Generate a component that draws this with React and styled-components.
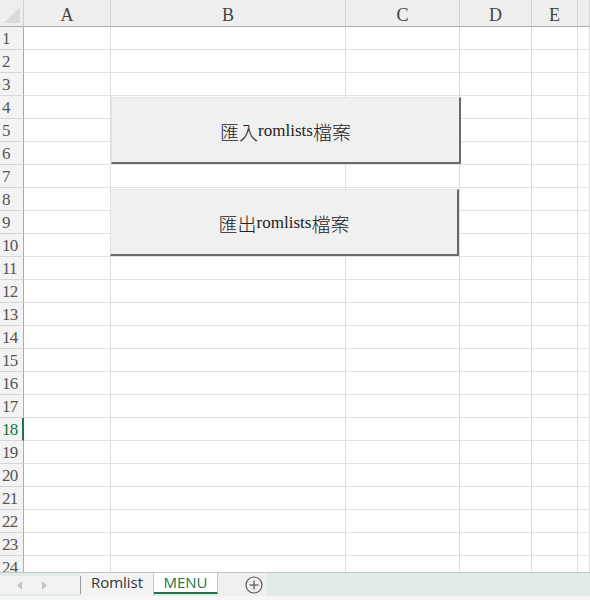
import React from 'react';
import styled, { createGlobalStyle } from 'styled-components';

const GlobalStyle = createGlobalStyle`
  html, body {
    margin: 0;
    padding: 0;
    background: #ffffff;
  }
  * {
    box-sizing: border-box;
  }
`;

const columns = ['A', 'B', 'C', 'D', 'E', ''];
const rows = Array.from({ length: 24 }, (_, i) => i + 1);
const selectedRow = 18;

export default function App() {
  return (
    <Page>
      <GlobalStyle />
      <Sheet>
        <Grid>
          <Corner>
            <svg width="16" height="16" viewBox="0 0 16 16">
              <polygon points="16,0 16,16 0,16" fill="#dadada" />
            </svg>
          </Corner>
          {columns.map((c, i) => (
            <ColHeader key={'h' + i}>{c}</ColHeader>
          ))}
          {rows.map(r => (
            <React.Fragment key={r}>
              <RowHeader selected={r === selectedRow}>{r}</RowHeader>
              {columns.map((c, i) => (
                <Cell key={r + '-' + i} />
              ))}
            </React.Fragment>
          ))}
        </Grid>

        <FormButton top={97} left={111} width={350}>
          匯入<Latin>romlists</Latin>檔案
        </FormButton>
        <FormButton top={189} left={110} width={349}>
          匯出<Latin>romlists</Latin>檔案
        </FormButton>
      </Sheet>

      <TabBar>
        <NavArea>
          <NavArrow>
            <svg width="6" height="9" viewBox="0 0 6 9">
              <polygon points="5,0 5,9 0,4.5" fill="#c4c4c4" />
            </svg>
          </NavArrow>
          <NavArrow>
            <svg width="6" height="9" viewBox="0 0 6 9">
              <polygon points="1,0 1,9 6,4.5" fill="#c4c4c4" />
            </svg>
          </NavArrow>
        </NavArea>
        <Tab>Romlist</Tab>
        <Tab active>MENU</Tab>
        <AddTab>
          <svg width="18" height="18" viewBox="0 0 18 18">
            <circle cx="9" cy="9" r="8" fill="none" stroke="#555" strokeWidth="1.2" />
            <line x1="9" y1="4.5" x2="9" y2="13.5" stroke="#555" strokeWidth="1.2" />
            <line x1="4.5" y1="9" x2="13.5" y2="9" stroke="#555" strokeWidth="1.2" />
          </svg>
        </AddTab>
        <Filler />
      </TabBar>
      <BottomStrip />
    </Page>
  );
}

const Page = styled.div`
  width: 590px;
  height: 600px;
  overflow: hidden;
  display: flex;
  flex-direction: column;
  background: #ffffff;
`;

const Sheet = styled.div`
  position: relative;
  height: 573px;
  overflow: hidden;
  border-bottom: 1px solid #c3c3c3;
`;

const Grid = styled.div`
  display: grid;
  grid-template-columns: 24px 87px 235px 114px 72px 46px 1fr;
  grid-template-rows: 27px repeat(24, 23px);
`;

const Corner = styled.div`
  background: #eeeeee;
  border-right: 1px solid #d0d0d0;
  border-bottom: 1px solid #ababab;
  display: flex;
  align-items: flex-end;
  justify-content: flex-end;
  padding: 0 3px 3px 0;
`;

const ColHeader = styled.div`
  background: #eeeeee;
  border-right: 1px solid #d6d6d6;
  border-bottom: 1px solid #ababab;
  font-family: "Liberation Serif", "Noto Sans CJK TC", serif;
  font-size: 18px;
  color: #444444;
  display: flex;
  align-items: center;
  justify-content: center;
  padding-top: 4px;
`;

const RowHeader = styled.div`
  background: #f3f3f3;
  border-right: ${props => (props.selected ? '2px solid #217346' : '1px solid #ababab')};
  border-bottom: 1px solid #d6d6d6;
  font-family: "Liberation Serif", "Noto Sans CJK TC", serif;
  font-size: 17px;
  line-height: 21px;
  color: ${props => (props.selected ? '#217346' : '#555555')};
  display: flex;
  align-items: center;
  padding: 0 0 0 2px;
  letter-spacing: -0.8px;
  white-space: nowrap;
  overflow: hidden;
`;

const Cell = styled.div`
  border-right: 1px solid #dcdcdc;
  border-bottom: 1px solid #e2e2e2;
`;

const FormButton = styled.div`
  position: absolute;
  top: ${props => props.top}px;
  left: ${props => props.left}px;
  width: ${props => props.width}px;
  height: 67px;
  background: #f0f0f0;
  border-top: 1px solid #e3e3e3;
  border-left: 1px solid #e3e3e3;
  border-right: 2px solid #6a6a6a;
  border-bottom: 2px solid #6a6a6a;
  display: flex;
  align-items: center;
  justify-content: center;
  font-family: "Noto Sans CJK TC", serif;
  font-size: 19px;
  font-weight: 300;
  color: #222222;
  padding-top: 2px;
`;

const Latin = styled.span`
  font-family: "Liberation Serif", serif;
  font-size: 17px;
  font-weight: 400;
`;

const TabBar = styled.div`
  display: flex;
  height: 23px;
  background: #e1ebe7;
`;

const NavArea = styled.div`
  width: 81px;
  display: flex;
  align-items: center;
  gap: 18px;
  padding-left: 17px;
  background: #f1f3f2;
  border-right: 1px solid #9a9a9a;
  margin: 3px 0 2px;
`;

const NavArrow = styled.div`
  display: flex;
  align-items: center;
`;

const Tab = styled.div`
  display: flex;
  align-items: flex-start;
  justify-content: center;
  padding: 0 10px;
  width: ${props => (props.active ? '64px' : '73px')};
  background: ${props => (props.active ? '#ffffff' : '#f3f3f3')};
  border-right: 1px solid #c6c6c6;
  border-bottom: ${props => (props.active ? '2px solid #217346' : 'none')};
  font-family: "Open Sans", "Noto Sans", sans-serif;
  font-size: 15px;
  line-height: 19px;
  color: ${props => (props.active ? '#217346' : '#333333')};
  margin-bottom: ${props => (props.active ? '2px' : '0')};
`;

const AddTab = styled.div`
  width: 48px;
  display: flex;
  align-items: center;
  justify-content: flex-end;
  padding-right: 3px;
  background: #f0f0f0;
`;

const Filler = styled.div`
  flex: 1;
`;

const BottomStrip = styled.div`
  height: 4px;
  background: #f6f6f6;
`;
